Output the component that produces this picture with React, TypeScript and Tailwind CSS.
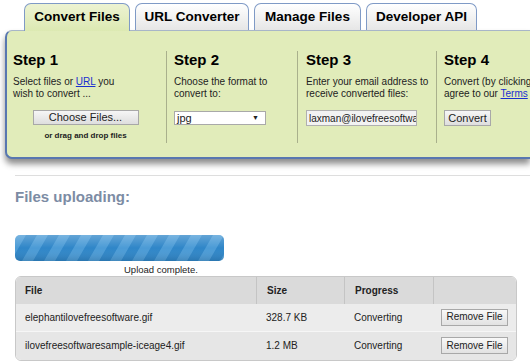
import React from "react"

const tabs = [
  { label: "Convert Files", w: "w-[106px]" },
  { label: "URL Converter", w: "w-[114px]" },
  { label: "Manage Files", w: "w-[107px]" },
  { label: "Developer API", w: "w-[111px]" },
]

const files = [
  { name: "elephantilovefreesoftware.gif", size: "328.7 KB" },
  { name: "ilovefreesoftwaresample-iceage4.gif", size: "1.2 MB" },
]

function Stripes() {
  return (
    <svg width="209" height="26" className="block">
      <defs>
        <pattern id="st" width="22" height="26" patternUnits="userSpaceOnUse" patternTransform="skewX(-30)">
          <rect width="22" height="26" fill="#2f86c8" />
          <rect width="11" height="26" fill="#4b9bd6" />
        </pattern>
        <linearGradient id="sh" x1="0" y1="0" x2="0" y2="1">
          <stop offset="0" stopColor="#ffffff" stopOpacity="0.25" />
          <stop offset="0.5" stopColor="#ffffff" stopOpacity="0" />
          <stop offset="1" stopColor="#000000" stopOpacity="0.12" />
        </linearGradient>
      </defs>
      <rect width="209" height="26" rx="5" fill="url(#st)" />
      <rect width="209" height="26" rx="5" fill="url(#sh)" />
    </svg>
  )
}

export default function App() {
  return (
    <div className="w-[530px] h-[363px] overflow-hidden bg-white font-['Liberation_Sans',sans-serif] text-[10px] text-[#222]">
      {/* Tabs */}
      <div className="flex gap-[5px] pl-[24px] pt-[3px] h-[30px]">
        {tabs.map((t, i) => (
          <div
            key={t.label}
            className={
              t.w +
              " shrink-0 h-[27px] flex items-center justify-center rounded-t-[7px] border border-b-0 border-[#7f9ac6] font-bold text-[13.5px] text-black " +
              (i === 0
                ? "bg-gradient-to-b from-[#edf3d2] to-[#dce9b2] relative z-10 h-[28px]"
                : "bg-gradient-to-b from-white to-[#e6e6e6]")
            }
          >
            {t.label}
          </div>
        ))}
      </div>

      {/* Steps panel */}
      <div className="ml-[5px] h-[129px] bg-[#e1ecba] border-l-2 border-t border-b-2 border-[#5877b0] border-t-[#a8b6c8] rounded-l-[7px] shadow-[0_5px_6px_rgba(0,0,0,0.45)] flex pt-[20px] pb-[14px]">
        <div className="w-[160px] shrink-0 pl-[6px] pr-[8px] border-r border-[#a9b08c]">
          <div className="font-bold text-[15px] text-black mb-[7px] leading-[18px]">Step 1</div>
          <div className="leading-[12px]">
            Select files or <span className="text-[#1a2fd0] underline">URL</span> you
            <br />
            wish to convert ...
          </div>
          <div className="flex flex-col items-center mt-[10px]">
            <button className="w-[106px] h-[15px] border border-[#a8a8a8] bg-gradient-to-b from-[#f6f6f6] to-[#dedede] text-[11px] text-[#222] leading-none">
              Choose Files...
            </button>
            <div className="font-bold text-[8px] mt-[5px]">or drag and drop files</div>
          </div>
        </div>
        <div className="w-[131px] shrink-0 pl-[7px] pr-[6px] border-r border-[#a9b08c]">
          <div className="font-bold text-[15px] text-black mb-[7px] leading-[18px]">Step 2</div>
          <div className="leading-[12px]">
            Choose the format to
            <br />
            convert to:
          </div>
          <div className="mt-[11px] w-[92px] h-[14px] bg-white border border-[#a9a9a9] flex items-center justify-between pl-[2px] pr-[6px] text-[11px]">
            <span>jpg</span>
            <span className="text-[7px]">▼</span>
          </div>
        </div>
        <div className="w-[139px] shrink-0 pl-[8px] pr-[4px] border-r border-[#a9b08c] whitespace-nowrap">
          <div className="font-bold text-[15px] text-black mb-[7px] leading-[18px]">Step 3</div>
          <div className="leading-[12px]">
            Enter your email address to
            <br />
            receive converted files:
          </div>
          <div className="mt-[10px] w-[111px] h-[16px] bg-[#f2f2f2] border border-[#b0b0b0] flex items-center pl-[2px] overflow-hidden whitespace-nowrap text-[10px]">
            laxman@ilovefreesoftwa
          </div>
        </div>
        <div className="flex-1 min-w-0 pl-[7px] whitespace-nowrap overflow-hidden">
          <div className="font-bold text-[15px] text-black mb-[7px] leading-[18px]">Step 4</div>
          <div className="leading-[12px]">
            Convert (by clicking
            <br />
            agree to our <span className="text-[#1a2fd0] underline">Terms</span>
          </div>
          <button className="mt-[10px] w-[47px] h-[16px] border border-[#a8a8a8] bg-gradient-to-b from-[#f6f6f6] to-[#dedede] text-[11px] leading-none">
            Convert
          </button>
        </div>
      </div>

      {/* Files uploading */}
      <div className="ml-[15px] mt-[16px] border-t border-[#dedede] pt-[10px]">
        <div className="font-bold text-[15px] text-[#7c8ca4]">Files uploading:</div>
      </div>
      <div className="ml-[15px] mt-[26px] w-[209px]">
        <Stripes />
        <div className="text-[9.5px] mt-[2px] ml-[109px] whitespace-nowrap">Upload complete.</div>
      </div>

      <div className="ml-[15px] mt-[-1px] w-[502px] rounded-[6px] border border-[#c8c8c8] overflow-hidden text-[10px]">
        <div className="flex h-[27px] bg-[#dadada] font-bold items-center">
          <div className="w-[240px] pl-[9px]">File</div>
          <div className="w-[88px] pl-[10px] h-full flex items-center border-l border-[#c4c4c4]">Size</div>
          <div className="w-[89px] pl-[10px] h-full flex items-center border-l border-[#c4c4c4]">Progress</div>
          <div className="flex-1 h-full border-l border-[#c4c4c4]" />
        </div>
        {files.map((f, i) => (
          <div
            key={f.name}
            className={"flex h-[28px] items-center " + (i === 0 ? "bg-[#ececec] border-b border-[#f6f6f6]" : "bg-[#e6e6e6]")}
          >
            <div className="w-[240px] pl-[9px]">{f.name}</div>
            <div className="w-[88px] pl-[10px]">{f.size}</div>
            <div className="w-[89px] pl-[10px]">Converting</div>
            <div className="flex-1 flex justify-center">
              <button className="w-[67px] h-[17px] border border-[#a8a8a8] bg-gradient-to-b from-[#f8f8f8] to-[#e2e2e2] text-[10px] leading-none">
                Remove File
              </button>
            </div>
          </div>
        ))}
      </div>
    </div>
  )
}
